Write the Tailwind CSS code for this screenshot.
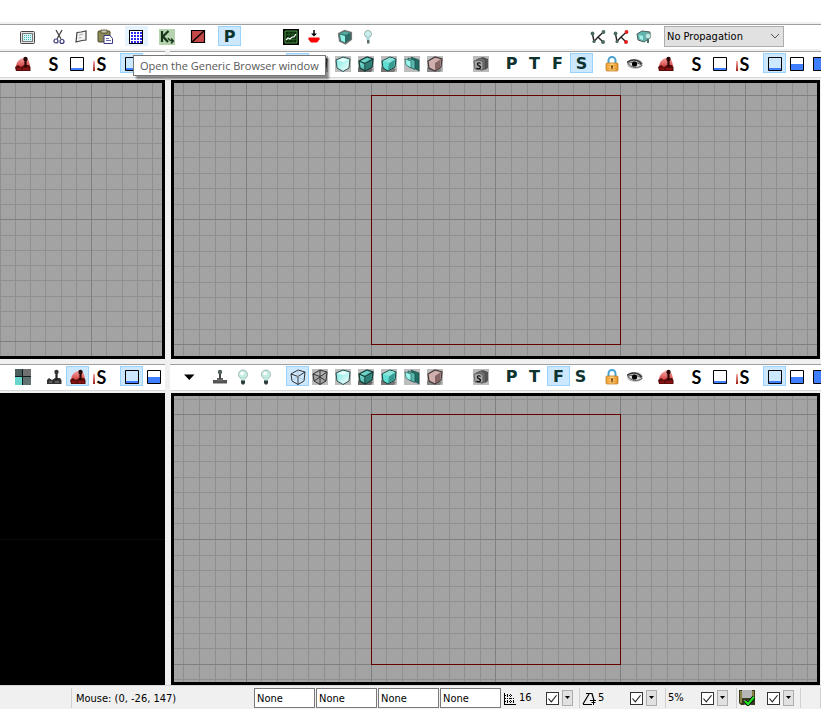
<!DOCTYPE html>
<html lang="en">
<head>
    <meta charset="UTF-8">
    <meta name="viewport" content="width=device-width, initial-scale=1.0">
    <title>Level Editor</title>
    <script src="https://cdn.jsdelivr.net/npm/@tailwindcss/browser@4"></script>
</head>
<body class="h-screen flex flex-col overflow-hidden bg-[#f0f0f0] text-black text-[11px] font-['DejaVu_Sans_Condensed','Noto_Sans',sans-serif]">
    <!-- Icon set -->
    <svg class="absolute size-0" aria-hidden="true">
        <defs>
            <linearGradient id="teal" x1="0" y1="0" x2="1" y2="1"><stop offset="0" stop-color="#8ff5ea"/><stop offset="1" stop-color="#2b8f86"/></linearGradient>
            <linearGradient id="pale" x1="0" y1="0" x2="1" y2="1"><stop offset="0" stop-color="#6fe8e0"/><stop offset="1" stop-color="#ffffff"/></linearGradient>
            <linearGradient id="body" x1="0" y1="0" x2="1" y2="0"><stop offset="0" stop-color="#f5a030"/><stop offset=".5" stop-color="#ffd27a"/><stop offset="1" stop-color="#e58a1c"/></linearGradient>
            <linearGradient id="redfade" x1="0" y1="0" x2="0" y2="1"><stop offset="0" stop-color="#f8a0a0"/><stop offset="1" stop-color="#c01818"/></linearGradient>
        </defs>
        <symbol id="i-props" viewBox="0 0 16 16"><rect x=".5" y="2.500" width="14" height="12" rx="1" fill="#e4e4e4" stroke="#444"/><rect x="2.500" y="4.500" width="10" height="8" fill="#d6f4f4" stroke="#777"/><path d="M4 6.500h8M4 8.500h8M4 10.500h8" stroke="#3fb3b3" stroke-dasharray="1 1"/></symbol>
        <symbol id="i-cut" viewBox="0 0 16 16"><path d="M5 1l5 9M11 1L6 10" stroke="#444" stroke-width="1.300" fill="none"/><circle cx="5" cy="12" r="2" fill="none" stroke="#39397c" stroke-width="1.200"/><circle cx="11" cy="12.500" r="2" fill="none" stroke="#39397c" stroke-width="1.200"/></symbol>
        <symbol id="i-copy" viewBox="0 0 16 16"><path d="M3 3.500l4-.5 5-1v9l-4 .5-6 1.500z" fill="#f4f4f4" stroke="#444" stroke-width="1.200"/><path d="M5 6l4-1M4.500 9l3-.5" stroke="#aaa" fill="none"/></symbol>
        <symbol id="i-paste" viewBox="0 0 16 16"><rect x="1" y="2" width="12" height="11" rx="1" fill="#8c8a55" stroke="#4b4a2a"/><path d="M4 1h6v3H4z" fill="#c9c9b5" stroke="#4b4a2a" stroke-width=".8"/><path d="M7 6.500h6l2.500 3v5H7z" fill="#fff" stroke="#38388a"/><path d="M9 9.500h3M9 11.500h5" stroke="#6a6ab5"/></symbol>
        <symbol id="i-browser" viewBox="0 0 16 16"><rect x="1.500" y="1.500" width="13" height="13" fill="#fff"/><path d="M4 3v11M7 3v11M10 3v11M13 3v11" stroke="#2a2af0" stroke-width="2" stroke-dasharray="2 1"/><rect x="1.500" y="1.500" width="13" height="13" fill="none" stroke="#000"/></symbol>
        <symbol id="i-kismet" viewBox="0 0 16 16"><path fill="#b5d3ae" d="M0 0h16v16H0z"/><path d="M3 2v11M9.500 2L4 7.500l5 5.500" stroke="#16351a" stroke-width="2.200" fill="none"/><path d="M9 9c1 2 2 3 5 3M12 9.500l2.500 2.500L12 14.500" stroke="#16351a" stroke-width="1.300" fill="none"/></symbol>
        <symbol id="i-red" viewBox="0 0 16 16"><path d="M1.500 1.500h13v12h-13z" fill="#c44848" stroke="#000" stroke-width="1.200"/><path d="M1.500 13.500l13-12" stroke="#000" stroke-width="1.300"/></symbol>
        <symbol id="i-chart" viewBox="0 0 16 16"><path d="M1 1h14v14H1z" fill="#0b2b0b" stroke="#000" stroke-width="2"/><path d="M2 2h12v12H2z" fill="none" stroke="#4f9a4f"/><path d="M3 5.500h10M3 10.500h10M6 3v10M10 3v10" stroke="#245a24"/><path d="M3 11l2-2 2 1 2-2 2 0 2-3" stroke="#fff" stroke-width="1.200" fill="none"/></symbol>
        <symbol id="i-drop" viewBox="0 0 16 16"><path d="M8 1v5" stroke="#000" stroke-width="1.500"/><path d="M5 4.500h6L8 7.500z"/><path d="M2.500 8.500h11v2l-2.500 3H5l-2.500-3z" fill="#f00"/></symbol>
        <symbol id="i-cubedark" viewBox="0 0 16 16"><path d="M1.500 4.500l6-3 7 2v7l-6 4.500-6-3z" fill="#2f6b65" stroke="#777" stroke-width="1.200"/><path d="M3 5.500l5 1.500v6.500l-4-2z" fill="#8ff0e6"/><path d="M3 4.500l5-2 5 1.500-4.500 2z" fill="#55aaa2"/></symbol>
        <symbol id="i-bulb" viewBox="0 0 16 16"><circle cx="8" cy="5.500" r="4.500" fill="#c6ede4" stroke="#93aaa5" stroke-width=".8"/><path d="M6 8h4v4H6z" fill="#bfe6dd"/><circle cx="7" cy="4.500" r="1.800" fill="#fff"/><path d="M6 11.500h4V14l-1 1.500H7L6 14z" fill="#2c3b37"/></symbol>
        <symbol id="i-smallbulb" viewBox="0 0 16 16"><circle cx="8" cy="5" r="3.500" fill="#c9efec" stroke="#8ba19f" stroke-width=".8"/><path d="M6.500 8h3v3h-3z" fill="#a5d8d2"/><path d="M7 11h2.500v3.500H7z" fill="#5c6f6c"/></symbol>
        <symbol id="i-path" viewBox="0 0 16 16"><path d="M2.500 5l1.500 7.500L8 8l5.500-5M8 8l5 5" stroke="#222" stroke-width="1.400" fill="none"/><g fill="#4b6b62"><circle cx="2.500" cy="4.500" r="1.900"/><circle cx="13.500" cy="3" r="1.900"/><circle cx="13" cy="13" r="2"/><circle cx="4" cy="12.500" r="1.600"/></g></symbol>
        <symbol id="i-pathred" viewBox="0 0 16 16"><path d="M2.500 5l1.500 7.500L8 8l5.500-5M8 8l5 5" stroke="#222" stroke-width="1.400" fill="none"/><g fill="#4b6b62"><circle cx="2.500" cy="4.500" r="1.900"/><circle cx="4" cy="12.500" r="1.600"/></g><g fill="#e02020"><circle cx="13.500" cy="3" r="1.900"/><circle cx="13" cy="13" r="2"/></g></symbol>
        <symbol id="i-cubebulb" viewBox="0 0 16 16"><path d="M1 5l5-3 8 1v6l-6 4-6-2z" fill="#62b5ae" stroke="#4b5f5d"/><path d="M3 6l4 1v4l-3-1z" fill="#a4f2ea"/><circle cx="12" cy="7" r="2.800" fill="#bfe9e4" stroke="#6f8a87" stroke-width=".7"/><path d="M11 10h2v4h-2z" fill="#4b6b66"/></symbol>
        <symbol id="i-arrow" viewBox="0 0 16 16"><path d="M3 5.500h10.500l-5.200 5.500z"/></symbol>
        <symbol id="i-stick" viewBox="0 0 16 16"><path d="M1 11h14v3.500H1z" fill="#555"/><path d="M5 9h6v3H5z" fill="#666"/><path d="M8 4v6" stroke="#444" stroke-width="2"/><circle cx="8" cy="3" r="2.200" fill="#4f5f5c"/></symbol>
        <symbol id="i-wire" viewBox="0 0 16 16"><path d="M1 5l7-4 7 2-1 9-6 3.500L2 12zM1 5l7 2.500L15 3M8 7.500v8" fill="none" stroke="#333"/><path d="M8 1v5M2 12l6-5 6 5" fill="none" stroke="#aaa" stroke-width=".6"/></symbol>
        <symbol id="i-brushwire" viewBox="0 0 16 16"><path fill="#bdbdbd" d="M0 0h16v16H0z"/><path d="M1 5l7-4 7 2-1 9-6 3.500L2 12zM1 5l7 2.500L15 3M8 7.500v8M8 1v6M2 12l6-4 6 4" fill="#a5a5a5" stroke="#333"/></symbol>
        <symbol id="i-unlit" viewBox="0 0 16 16"><path fill="#bdbdbd" d="M0 0h16v16H0z"/><path d="M1 4l7-3 7 2-1 9-6 3.500L2 12z" fill="url(#pale)" stroke="#2f4f4c"/><path d="M2 4.500l6-2.500 5 1.500-5 2.500z" fill="#e8fffc"/></symbol>
        <symbol id="i-lit" viewBox="0 0 16 16"><path fill="#bdbdbd" d="M0 0h16v16H0z"/><path fill="#6a6a6a" d="M0 12l4-3 11 4-2 3H0z"/><path d="M1 5l8-4 6 2-1 8-7 4-5-3z" fill="url(#teal)" stroke="#173d39" stroke-width="1.300"/><path d="M8 8l6-4-1 7-5 3z" fill="#2c7f77"/><path d="M1 5l6 2.500L15 3M7 7.500V15" fill="none" stroke="#173d39" stroke-width="1.300"/></symbol>
        <symbol id="i-lighting" viewBox="0 0 16 16"><path fill="#bdbdbd" d="M0 0h16v16H0z"/><path fill="#777" d="M0 12l4-3 11 4-2 3H0z"/><path d="M1 5l8-4 6 2-1 8-7 4-5-3z" fill="#5fded3" stroke="#173d39"/><path d="M8 7.500l6-4-1 7.500-6 3.500z" fill="#3a9991"/><path d="M2 5l7-3.500 5 1.500-6 4z" fill="#8fe5dd"/></symbol>
        <symbol id="i-layers" viewBox="0 0 16 16"><path fill="#bdbdbd" d="M0 0h16v16H0z"/><path d="M7 1l8 3v11l-5-3z" fill="#206c63" stroke="#174b45" stroke-width=".6"/><path d="M4 2l7 2.500v9L5 11z" fill="#59b8ae" stroke="#174b45" stroke-width=".7"/><path d="M1 3l6 2v7L2 9z" fill="#9af5ec" stroke="#2b615b" stroke-width=".7"/></symbol>
        <symbol id="i-complex" viewBox="0 0 16 16"><path fill="#bdbdbd" d="M0 0h16v16H0z"/><path fill="#888" d="M0 12l4-3 11 4-2 3H0z"/><path d="M1 5l7-4 7 2-1 8-6 4-6-3z" fill="#cfb0ae" stroke="#443838" stroke-width="1.200"/><path d="M8 7l6-4-1 8-5 3.500z" fill="#866664"/></symbol>
        <symbol id="i-stream" viewBox="0 0 16 16"><path fill="#bbb" d="M0 0h16v16H0z"/><path d="M5 3l5-2 5 2v9l-3 2z" fill="#555"/><path d="M3 4l5-2 4 2v9l-4 1z" fill="#777" stroke="#444" stroke-width=".6"/><path d="M1 5l5-1 4 1.500V14l-8-1z" fill="#a5a5a5" stroke="#444" stroke-width=".7"/><path d="M7.500 7.500C6 6 4 7 4.500 8.500S8 10 7.500 11.500 4.500 13 3.500 12" fill="none" stroke="#111" stroke-width="1.200"/></symbol>
        <symbol id="i-lock" viewBox="0 0 16 16"><path d="M4.500 8V4.500a3.500 3.500 0 017 0V8" fill="none" stroke="#4aa3cf" stroke-width="2"/><rect x="2" y="7" width="12" height="8" rx="1" fill="url(#body)" stroke="#b8741e" stroke-width=".7"/><path d="M3 9.500h10M3 12.500h10" stroke="#e79f3c" stroke-width=".7"/><circle cx="8" cy="10.500" r="1" fill="#5a3508"/><path d="M7.500 11h1v2.500h-1z" fill="#5a3508"/></symbol>
        <symbol id="i-eye" viewBox="0 0 16 16"><ellipse cx="8" cy="8" rx="8" ry="5" fill="#c4c4c4"/><path d="M0 6.500C4 3 11 3 14.500 8" fill="none" stroke="#333" stroke-width="1.500"/><path d="M1 7.500c3-2 9-2 14 2-4 3-11 2.500-14-2z" fill="#ddd" stroke="#444" stroke-width=".9"/><circle cx="7.500" cy="8" r="2.600" fill="#000"/></symbol>
        <symbol id="i-redstick" viewBox="0 0 16 16"><path d="M1 15C0 7 4 2 9 2s6 4 6 13z" fill="url(#redfade)"/><path d="M0 11l3-2 3 2 3-2h5l1.500 2v4H1z" fill="#5f0c0c"/><path d="M10.500 4v7" stroke="#2a0606" stroke-width="2.200"/><circle cx="10.500" cy="3" r="2.200" fill="#2a0606"/><path d="M2 13h4M8 13h6" stroke="#b01818"/></symbol>
        <symbol id="i-darkstick" viewBox="0 0 16 16"><path d="M1 11l2-2 3 2 3-2h5l1.500 2v4H1z" fill="#333"/><path d="M10.500 4v7" stroke="#222" stroke-width="2.200"/><circle cx="10.500" cy="3" r="2.200" fill="#333"/><path d="M3 13h3M9 13h4" stroke="#888"/></symbol>
        <symbol id="i-quad" viewBox="0 0 16 16"><path fill="#0b1f20" d="M0 0h16v16H0z"/><path fill="#4c5d5c" d="M0 0h7v7H0z"/><path fill="#707070" d="M8 0h8v7H8z"/><path fill="#68d6cc" d="M0 8h7v8H0z"/><path fill="#626f70" d="M8 8h8v8H8z"/></symbol>
        <symbol id="i-low" viewBox="0 0 16 16"><path fill="#3f7fff" d="M2 12h12v2H2z"/><path d="M1.500 1.500h13v13h-13z" fill="none" stroke="#000"/></symbol>
        <symbol id="i-box" viewBox="0 0 16 16"><path fill="#fff" d="M2 2h12v10H2z"/><path fill="#3f7fff" d="M2 12h12v2H2z"/><path d="M1.500 1.500h13v13h-13z" fill="none" stroke="#000"/></symbol>
        <symbol id="i-half" viewBox="0 0 16 16"><path fill="#fff" d="M2 2h12v6H2z"/><path fill="#3f7fff" d="M2 8h12v6H2z"/><path d="M1.500 1.500h13v13h-13z" fill="none" stroke="#000"/></symbol>
        <symbol id="i-full" viewBox="0 0 16 16"><path d="M1.500 1.500h13v13h-13z" fill="#3f7fff" stroke="#000"/></symbol>
        <symbol id="i-grid" viewBox="0 0 16 16"><path d="M1.500 3v12M1 14.500h12" stroke="#000"/><path d="M4.500 4v10M7.500 4v10M10.500 8v6M2 5.500h7M2 8.500h10M2 11.500h10" stroke="#000" stroke-dasharray="1 1"/></symbol>
        <symbol id="i-angle" viewBox="0 0 16 16"><path d="M1 14l6-10M1 14.500h9" stroke="#000" stroke-width="1.200"/><path d="M4 3.500h6l2 7" fill="none" stroke="#000" stroke-width="1.200"/><path d="M8 10.500h6M11.500 8v7M9.500 12.500h4" stroke="#000"/></symbol>
        <symbol id="i-save" viewBox="0 0 16 16"><path d="M0 0h16v15H2l-2-2z" fill="#3a3a20"/><path d="M1 1h2v12H1zM13 1h2v8h-2z" fill="#8a8444"/><path d="M3 0h10v8H3z" fill="#b5b5b5"/><path d="M5 10h7v5H5z" fill="#777"/><path d="M6 11l3 3 6-7" fill="none" stroke="#000" stroke-width="4"/><path d="M6 11l3 3 6-7" fill="none" stroke="#1fe01f" stroke-width="2.400"/></symbol>
        <symbol id="i-check" viewBox="0 0 16 16"><path d="M3 8l3.500 4L13 4" fill="none" stroke="#222" stroke-width="1.400"/></symbol>
    </svg>

    <!-- Main toolbar -->
    <header class="shrink-0">
        <div class="h-[22px] bg-white"></div>
        <div class="mt-0.5 mb-0.5 h-[25px] pt-px pl-[17px] bg-white border-t border-[#a0a0a0] flex items-start gap-2">
            <div class="flex" data-tools="props"></div>
            <div class="flex" data-tools="cut copy paste"></div>
            <div class="relative flex">
                <button aria-label="Generic Browser" class="w-[23px] h-5 pt-0.5 pr-0.5 flex items-center justify-center bg-[#e5f3ff]"><svg class="size-4 shrink-0"><use href="#i-browser"/></svg></button>
                <div role="tooltip" class="absolute z-10 left-2 top-[29px] h-[21px] px-1.5 bg-white border border-[#767676] shadow-[3px_3px_2px_rgba(0,0,0,0.45)] font-['Open_Sans',sans-serif] text-[11px] leading-[19px] text-[#575757] whitespace-nowrap">Open the Generic Browser window</div>
            </div>
            <div class="flex" data-tools="kismet"></div>
            <div class="flex" data-tools="red"></div>
            <div class="flex" data-tools="P" data-active="P"></div>
            <div class="flex ml-[31px]" data-tools="chart drop"></div>
            <div class="flex" data-tools="cubedark smallbulb"></div>
            <div class="flex ml-[199px]" data-tools="path pathred cubebulb"></div>
            <div class="relative w-[120px] h-[21px] shrink-0">
                <select aria-label="Propagation" class="appearance-none w-full h-full pt-0.5 pl-0.5 bg-[#e1e1e1] border border-[#adadad] text-[11px]">
                    <option>No Propagation</option>
                </select>
                <svg class="absolute right-1 top-1.5 w-2.5 h-2 pointer-events-none" viewBox="0 0 10 8"><path d="M1 2l4 4 4-4" fill="none" stroke="#555"/></svg>
            </div>
        </div>
    </header>

    <!-- Viewports -->
    <main class="flex-1 min-h-0 grid grid-cols-[165fr_651fr] grid-rows-[308fr_321fr] gap-[5px]">
        <section class="min-w-0 min-h-0 flex flex-col">
            <div class="h-[27px] shrink-0 mb-0.5 pt-px pl-3 bg-white border-t border-t-[#a0a0a0] border-b border-b-[#d8d8d8] flex items-start gap-2 overflow-hidden">
                <div class="flex" data-tools="redstick"></div>
                <div class="flex" data-tools="s box barS"></div>
                <div class="flex" data-tools="low half" data-active="low"></div>
            </div>
            <div class="flex-1 min-h-0 border-3 border-l-0 border-black bg-[#a3a3a3] overflow-hidden">
                <canvas class="block w-full h-full" data-step="15.25" data-x="91"></canvas>
            </div>
        </section>
        <section class="min-w-0 min-h-0 flex flex-col">
            <div class="h-[27px] shrink-0 mb-0.5 pt-px pl-2 bg-white border-t border-t-[#a0a0a0] border-b border-b-[#d8d8d8] flex items-start gap-2 overflow-hidden">
                <div class="flex" data-tools="arrow"></div>
                <div class="flex" data-tools="stick bulb bulb"></div>
                <div class="flex" data-tools="wire brushwire unlit lit lighting layers complex" data-active="wire"></div>
                <div class="flex ml-[15px]" data-tools="stream"></div>
                <div class="flex" data-tools="P T F S" data-active="S"></div>
                <div class="flex" data-tools="lock eye"></div>
                <div class="flex" data-tools="redstick"></div>
                <div class="flex" data-tools="s box barS"></div>
                <div class="flex" data-tools="low half full" data-active="low"></div>
            </div>
            <div class="flex-1 min-h-0 mx-px border-3 border-black bg-[#a3a3a3] overflow-hidden">
                <canvas class="block w-full h-full" data-step="15.6" data-brush></canvas>
            </div>
        </section>
        <section class="min-w-0 min-h-0 flex flex-col">
            <div class="h-[27px] shrink-0 mb-0.5 pt-px pl-3 bg-white border-t border-t-[#a0a0a0] border-b border-b-[#d8d8d8] flex items-start gap-2 overflow-hidden">
                <div class="flex" data-tools="quad"></div>
                <div class="flex" data-tools="darkstick redstick barS" data-active="redstick"></div>
                <div class="flex" data-tools="low half" data-active="low"></div>
            </div>
            <div class="flex-1 min-h-0 bg-black flex flex-col justify-center"><div class="h-px bg-[#0c0c0c]"></div></div>
        </section>
        <section class="min-w-0 min-h-0 flex flex-col">
            <div class="h-[27px] shrink-0 mb-0.5 pt-px pl-2 bg-white border-t border-t-[#a0a0a0] border-b border-b-[#d8d8d8] flex items-start gap-2 overflow-hidden">
                <div class="flex" data-tools="arrow"></div>
                <div class="flex" data-tools="stick bulb bulb"></div>
                <div class="flex" data-tools="wire brushwire unlit lit lighting layers complex" data-active="wire"></div>
                <div class="flex ml-[15px]" data-tools="stream"></div>
                <div class="flex" data-tools="P T F S" data-active="F"></div>
                <div class="flex" data-tools="lock eye"></div>
                <div class="flex" data-tools="redstick"></div>
                <div class="flex" data-tools="s box barS"></div>
                <div class="flex" data-tools="low half full" data-active="low"></div>
            </div>
            <div class="flex-1 min-h-0 mx-px border-3 border-black bg-[#a3a3a3] overflow-hidden">
                <canvas class="block w-full h-full" data-step="15.6" data-brush></canvas>
            </div>
        </section>
    </main>

    <!-- Status bar -->
    <footer class="h-6 shrink-0 border-t border-[#d8d8d8] flex items-start pt-0.5 whitespace-nowrap overflow-hidden">
        <div class="w-[72px] h-5 shrink-0 border-r border-[#d0d0d0]"></div>
        <div class="w-[182px] shrink-0 pl-1 leading-[22px]">Mouse: (0, -26, 147)</div>
        <div class="flex gap-px">
            <input aria-label="X" value="None" class="w-[61px] h-5 px-0.5 bg-white border border-[#7a7a7a]">
            <input aria-label="Y" value="None" class="w-[61px] h-5 px-0.5 bg-white border border-[#7a7a7a]">
            <input aria-label="Z" value="None" class="w-[61px] h-5 px-0.5 bg-white border border-[#7a7a7a]">
            <input aria-label="W" value="None" class="w-[61px] h-5 px-0.5 bg-white border border-[#7a7a7a]">
        </div>
        <div class="w-[79px] h-5 shrink-0 pl-0.5 pr-1.5 flex items-center border-r border-[#d0d0d0]">
            <svg class="size-4"><use href="#i-grid"/></svg>
            <label for="snapGrid" class="flex-1">16</label>
            <span data-check="snapGrid"></span>
        </div>
        <div class="w-[86px] h-5 shrink-0 pl-0.5 pr-2 flex items-center border-r border-[#d0d0d0]">
            <svg class="size-4"><use href="#i-angle"/></svg>
            <label for="snapAngle" class="flex-1">5</label>
            <span data-check="snapAngle"></span>
        </div>
        <div class="w-[71px] h-5 shrink-0 pl-0.5 pr-2 flex items-center border-r border-[#d0d0d0]">
            <label for="snapScale" class="flex-1">5%</label>
            <span data-check="snapScale"></span>
        </div>
        <div class="w-16 h-5 shrink-0 pl-0.5 pr-1.5 flex items-center justify-between border-r border-[#d0d0d0]">
            <svg class="size-4"><use href="#i-save"/></svg>
            <span data-check="autosave"></span>
        </div>
        <div class="w-5 h-5 shrink-0 border-r border-[#d0d0d0]"></div>
    </footer>

    <script>
        function face(name) {
            if (['P', 'T', 'F', 'S'].includes(name)) {
                return `<span class="font-['DejaVu_Sans',sans-serif] font-bold text-base leading-5 text-[#0d332f]">${name}</span>`;
            }
            if (name === 's') {
                return `<span class="font-[Lato,sans-serif] font-bold text-lg leading-5">S</span>`;
            }
            if (name === 'barS') {
                return `<span class="w-0.5 h-2.5 mt-1 mr-0.5 bg-linear-to-b from-[#f4b0b0] to-[#a01010]"></span><span class="font-[Lato,sans-serif] font-bold text-lg leading-5">S</span>`;
            }
            return `<svg class="size-4 shrink-0"><use href="#i-${name}"/></svg>`;
        }

        // Toolbar buttons
        document.querySelectorAll('[data-tools]').forEach(group => {
            group.innerHTML = group.dataset.tools.split(' ').map(name => {
                const on = name === group.dataset.active;
                const look = on ? 'pt-px bg-[#cce8ff] border border-[#99d1ff]' : 'pt-0.5 pr-0.5';
                return `<button aria-label="${name}" class="w-[23px] h-5 shrink-0 flex items-center justify-center ${look}">${face(name)}</button>`;
            }).join('');
        });

        // Snap toggles with their menu buttons
        document.querySelectorAll('[data-check]').forEach(cell => {
            const id = cell.dataset.check;
            cell.outerHTML = `<span class="flex items-center gap-[3px]">
                <span class="grid">
                    <input id="${id}" type="checkbox" aria-label="${id}" checked class="peer col-start-1 row-start-1 appearance-none size-[13px] bg-white border border-[#333]">
                    <svg class="col-start-1 row-start-1 size-[13px] pointer-events-none invisible peer-checked:visible"><use href="#i-check"/></svg>
                </span>
                <button aria-label="${id} options" class="w-[11px] h-4 flex items-center justify-center bg-[#e1e1e1] border border-[#adadad]"><svg class="w-[7px] h-1 shrink-0" viewBox="0 0 7 4"><path d="M1 0h5L3.500 3z"/></svg></button>
            </span>`;
        });

        // Viewport grid: every eighth line is a major one
        function drawGrid(canvas) {
            const w = canvas.width = canvas.clientWidth;
            const h = canvas.height = canvas.clientHeight;
            const ctx = canvas.getContext('2d');
            const step = Number(canvas.dataset.step);
            const cx = canvas.dataset.x ? Number(canvas.dataset.x) : w / 2 - 0.1;
            const cy = h / 2 - 0.1;
            for (const major of [false, true]) {
                ctx.fillStyle = major ? '#7f7f7f' : '#8f8f8f';
                for (let i = -40; i <= 40; i++) {
                    if ((i % 8 === 0) !== major) continue;
                    ctx.fillRect(Math.round(cx + i * step), 0, 1, h);
                    ctx.fillRect(0, Math.round(cy + i * step), w, 1);
                }
            }
            if ('brush' in canvas.dataset) {
                const r = step * 8;
                const left = Math.round(cx - r);
                const top = Math.round(cy - r);
                ctx.strokeStyle = '#640000';
                ctx.strokeRect(left + 0.5, top + 0.5, Math.round(cx + r) - left, Math.round(cy + r) - top);
            }
        }

        const observer = new ResizeObserver(entries => entries.forEach(entry => drawGrid(entry.target)));
        document.querySelectorAll('canvas').forEach(canvas => observer.observe(canvas));
    </script>
</body>
</html>
